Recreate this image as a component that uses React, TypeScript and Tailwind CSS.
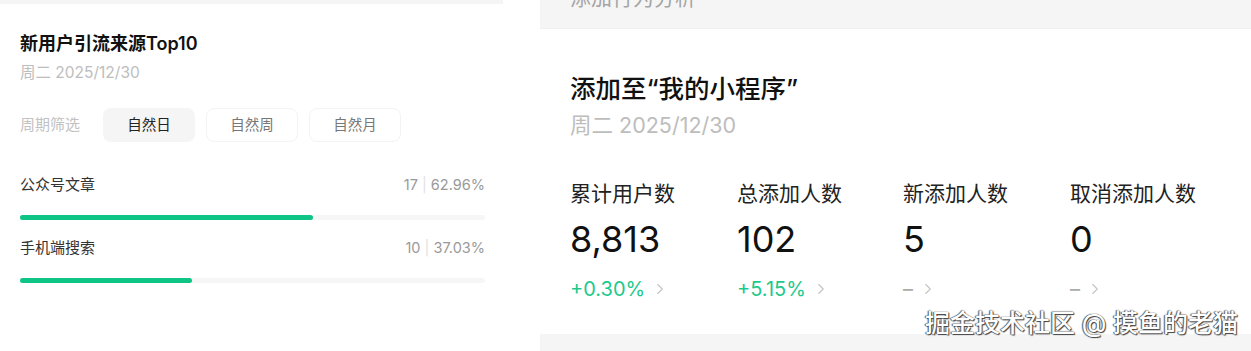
import { ChevronRight } from "lucide-react";

const FONT = "font-['Inter','Noto_Sans_CJK_SC',sans-serif]";

type Source = { label: string; count: number; pct: string; width: number };

const SOURCES: Source[] = [
  { label: "公众号文章", count: 17, pct: "62.96%", width: 62.96 },
  { label: "手机端搜索", count: 10, pct: "37.03%", width: 37.03 },
];

type Stat = { label: string; value: string; change: string; up: boolean };

const STATS: Stat[] = [
  { label: "累计用户数", value: "8,813", change: "+0.30%", up: true },
  { label: "总添加人数", value: "102", change: "+5.15%", up: true },
  { label: "新添加人数", value: "5", change: "–", up: false },
  { label: "取消添加人数", value: "0", change: "–", up: false },
];

function SourcePanel() {
  return (
    <div className="w-[504px] shrink-0">
      <div className="h-[4px] w-[503px] bg-[#f5f5f5]" />
      <div className="px-5 pt-[28px]">
        <h2 className="text-[18px] font-semibold leading-[24px] text-[#111]">新用户引流来源Top10</h2>
        <p className="mt-[7px] text-[15.5px] leading-[20px] text-[#bdbdbd]">周二 2025/12/30</p>

        <div className="mt-[25px] flex items-center">
          <span className="w-[83px] text-[15px] text-[#c2c2c2]">周期筛选</span>
          <div className="flex gap-[11px]">
            {["自然日", "自然周", "自然月"].map((t, i) => (
              <button
                key={t}
                className={
                  i === 0
                    ? "flex h-[34px] w-[92px] items-center justify-center rounded-lg bg-[#f5f5f5] text-[14.5px] text-[#222]"
                    : "flex h-[34px] w-[92px] items-center justify-center rounded-lg border border-[#f3f3f3] bg-white text-[14.5px] text-[#777]"
                }
              >
                {t}
              </button>
            ))}
          </div>
        </div>

        <div className="mt-[32px] flex w-[465px] flex-col gap-[17px]">
          {SOURCES.map((s) => (
            <div key={s.label}>
              <div className="flex h-[22px] items-center justify-between">
                <span className="text-[15px] text-[#333]">{s.label}</span>
                <span className="text-[14.5px] text-[#9a9a9a]">
                  {s.count} <span className="text-[#e2e2e2]">|</span> {s.pct}
                </span>
              </div>
              <div className="mt-[19px] h-[5px] w-full rounded-full bg-[#f6f6f6]">
                <div className="h-full rounded-full bg-[#0ec585]" style={{ width: `${s.width}%` }} />
              </div>
            </div>
          ))}
        </div>
      </div>
    </div>
  );
}

function AddPanel() {
  return (
    <div className="ml-[36px] flex h-[351px] flex-1 flex-col">
      <div className="h-[29px] overflow-hidden border-b border-[#efefef] bg-[#f5f5f5] pl-[30px]">
        <p className="-mt-[14px] text-[21px] leading-[24px] text-[#a5a5a5]">添加行为分析</p>
      </div>
      <div className="flex-1 bg-white pl-[30px] pt-[44px]">
        <h2 className="text-[25.5px] font-medium leading-[32px] text-[#111]">添加至“我的小程序”</h2>
        <p className="mt-[6px] text-[21.5px] leading-[28px] text-[#bdbdbd]">周二 2025/12/30</p>
        <div className="mt-[41px] grid grid-cols-[167px_166px_167px_167px]">
          {STATS.map((s) => (
            <div key={s.label} className="flex flex-col">
              <span className="text-[21px] leading-[28px] text-[#222]">{s.label}</span>
              <span className="mt-[10px] text-[36px] leading-[42px] text-[#111]">{s.value}</span>
              <span className="mt-[16px] flex items-center text-[20px] leading-[26px]">
                <span className={s.up ? "text-[#1ec98c]" : "text-[#aaa]"}>{s.change}</span>
                <ChevronRight className="ml-[6px] size-[18px] text-[#c4c4c4]" strokeWidth={1.5} />
              </span>
            </div>
          ))}
        </div>
      </div>
      <div className="h-[17px] bg-[#f5f5f5]" />
    </div>
  );
}

export default function App() {
  return (
    <div className={`relative flex h-[351px] w-[1251px] overflow-hidden bg-white ${FONT}`}>
      <SourcePanel />
      <AddPanel />
      <span className="absolute right-[13px] top-[307px] text-[25px] font-medium leading-[32px] text-white [text-shadow:0_0_1px_#222,1px_1px_1px_#444,-1px_0_1px_#666]">
        掘金技术社区 @ 摸鱼的老猫
      </span>
    </div>
  );
}
